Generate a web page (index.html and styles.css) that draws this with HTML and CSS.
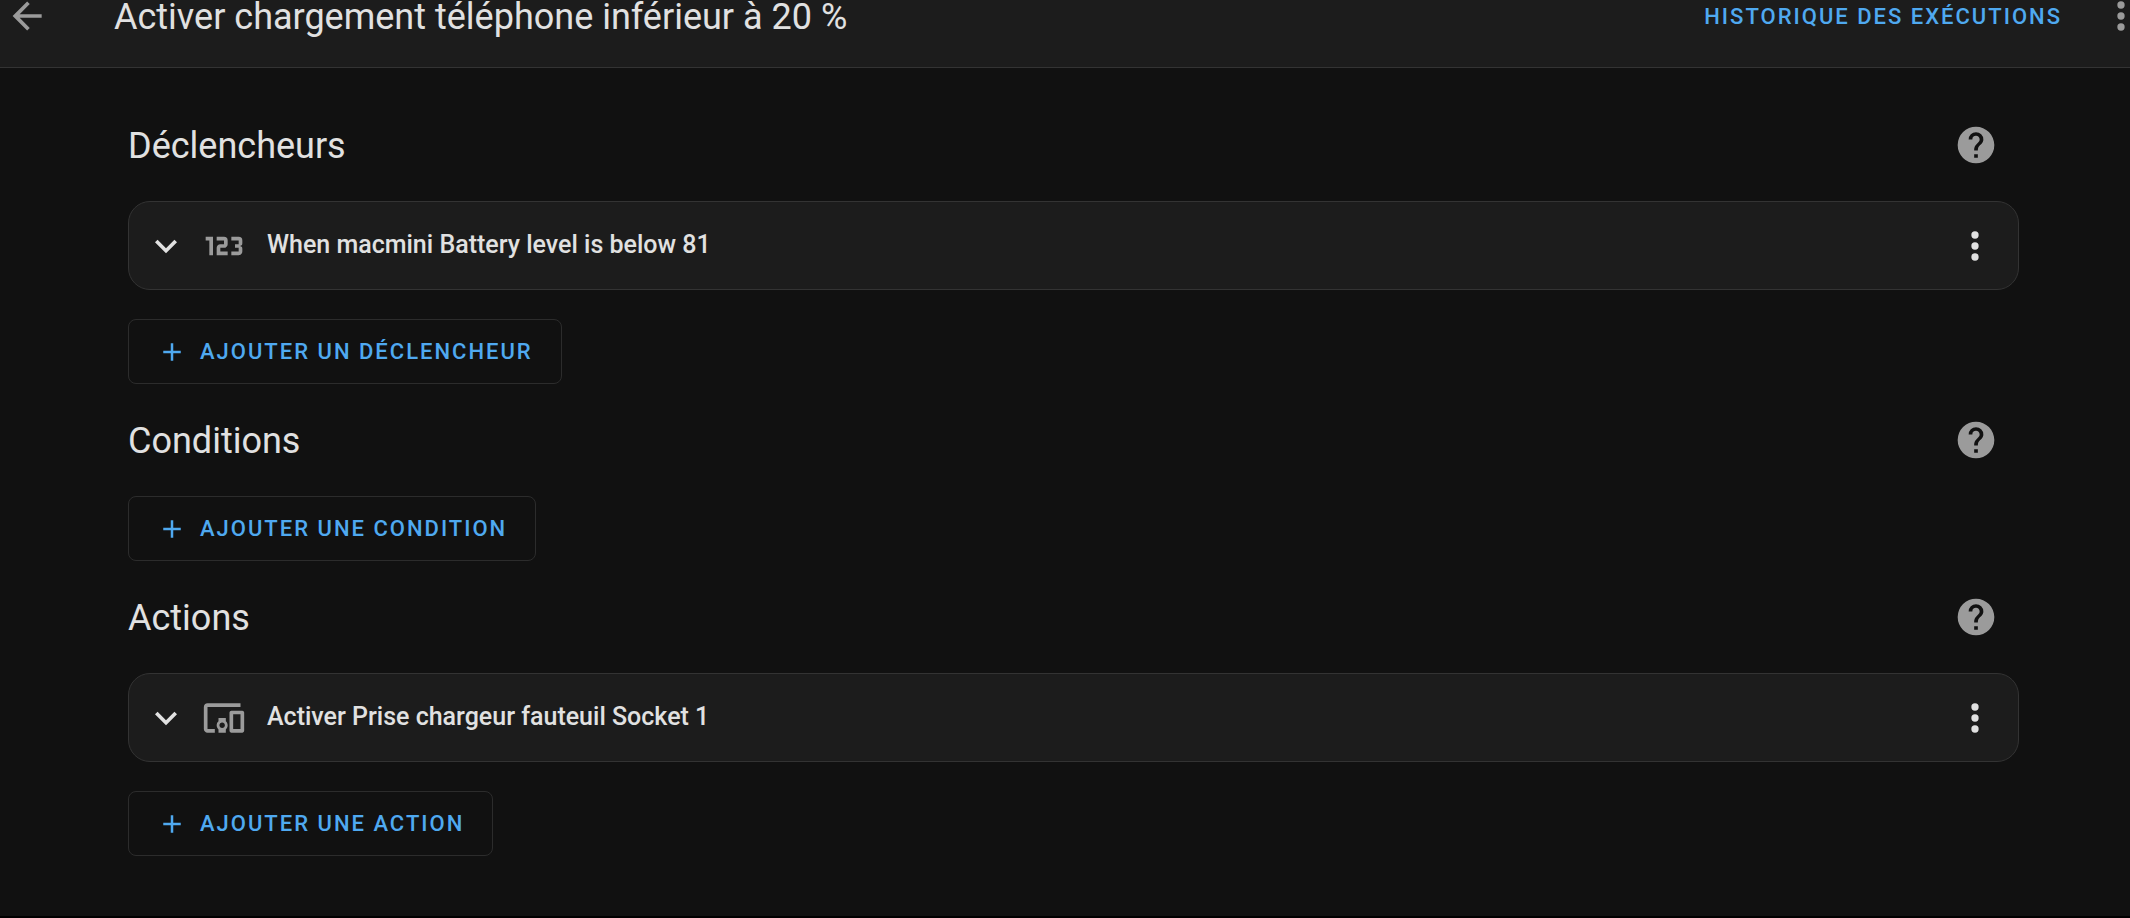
FILE: index.html
```html
<!DOCTYPE html>
<html lang="fr">
<head>
<meta charset="utf-8">
<title>Activer chargement téléphone inférieur à 20 %</title>
<link rel="stylesheet" href="styles.css">
</head>
<body>
<svg class="sprite" aria-hidden="true">
  <symbol id="back" viewBox="0 0 24 24"><path d="M20,11V13H8L13.5,18.5L12.08,19.92L4.16,12L12.08,4.08L13.5,5.5L8,11H20Z"/></symbol>
  <symbol id="dots" viewBox="0 0 24 24"><path d="M12,16A2,2 0 0,1 14,18A2,2 0 0,1 12,20A2,2 0 0,1 10,18A2,2 0 0,1 12,16M12,10A2,2 0 0,1 14,12A2,2 0 0,1 12,14A2,2 0 0,1 10,12A2,2 0 0,1 12,10M12,4A2,2 0 0,1 14,6A2,2 0 0,1 12,8A2,2 0 0,1 10,6A2,2 0 0,1 12,4Z"/></symbol>
  <symbol id="help" viewBox="0 0 24 24"><path d="M15.07,11.25L14.17,12.17C13.45,12.89 13,13.5 13,15H11V14.5C11,13.39 11.45,12.39 12.17,11.67L13.41,10.41C13.78,10.05 14,9.55 14,9C14,7.89 13.1,7 12,7A2,2 0 0,0 10,9H8A4,4 0 0,1 12,5A4,4 0 0,1 16,9C16,9.88 15.64,10.67 15.07,11.25M13,19H11V17H13M12,2A10,10 0 0,0 2,12A10,10 0 0,0 12,22A10,10 0 0,0 22,12C22,6.47 17.5,2 12,2Z"/></symbol>
  <symbol id="chevron" viewBox="0 0 24 24"><path d="M7.41,8.58L12,13.17L16.59,8.58L18,10L12,16L6,10L7.41,8.58Z"/></symbol>
  <symbol id="plus" viewBox="0 0 24 24"><path d="M19,13H13V19H11V13H5V11H11V5H13V11H19V13Z"/></symbol>
  <symbol id="numeric" viewBox="0 0 24 24"><path d="M4,17V9H2V7H6V17H4M22,15C22,16.11 21.1,17 20,17H16V15H20V13H18V11H20V9H16V7H20A2,2 0 0,1 22,9V10.5A1.5,1.5 0 0,1 20.5,12A1.5,1.5 0 0,1 22,13.5V15M14,15V17H8V13C8,11.89 8.9,11 10,11H12V9H8V7H12A2,2 0 0,1 14,9V11C14,12.11 13.1,13 12,13H10V15H14Z"/></symbol>
  <symbol id="devices" viewBox="0 0 24 24"><path d="M3 6H21V4H3C1.9 4 1 4.9 1 6V18C1 19.1 1.9 20 3 20H7V18H3V6M13 12H9V13.78C8.39 14.33 8 15.11 8 16C8 16.89 8.39 17.67 9 18.22V20H13V18.22C13.61 17.67 14 16.88 14 16S13.61 14.33 13 13.78V12M11 17.5C10.17 17.5 9.5 16.83 9.5 16S10.17 14.5 11 14.5 12.5 15.17 12.5 16 11.83 17.5 11 17.5M22 8H16C15.5 8 15 8.5 15 9V19C15 19.5 15.5 20 16 20H22C22.5 20 23 19.5 23 19V9C23 8.5 22.5 8 22 8M21 18H17V10H21V18Z"/></symbol>
</svg>

<header class="toolbar">
  <button class="icon-button muted" type="button" aria-label="Retour"><svg class="icon"><use href="#back"/></svg></button>
  <h1 class="title">Activer chargement téléphone inférieur à 20 %</h1>
  <a class="history" href="#history">HISTORIQUE DES EXÉCUTIONS</a>
  <button class="icon-button muted" type="button" aria-label="Menu"><svg class="icon"><use href="#dots"/></svg></button>
</header>

<main class="content">
  <section class="group">
    <div class="group-head">
      <h2 class="title">Déclencheurs</h2>
      <a class="icon-button muted" href="#help-triggers" aria-label="Aide sur les déclencheurs"><svg class="icon"><use href="#help"/></svg></a>
    </div>
    <article class="card">
      <button class="expand" type="button" aria-expanded="false">
        <svg class="icon"><use href="#chevron"/></svg>
        <svg class="icon muted"><use href="#numeric"/></svg>
        <span class="label">When macmini Battery level is below 81</span>
      </button>
      <button class="icon-button" type="button" aria-label="Options du déclencheur"><svg class="icon"><use href="#dots"/></svg></button>
    </article>
    <button class="add" type="button"><svg class="icon-small"><use href="#plus"/></svg>AJOUTER UN DÉCLENCHEUR</button>
  </section>

  <section class="group">
    <div class="group-head">
      <h2 class="title">Conditions</h2>
      <a class="icon-button muted" href="#help-conditions" aria-label="Aide sur les conditions"><svg class="icon"><use href="#help"/></svg></a>
    </div>
    <button class="add" type="button"><svg class="icon-small"><use href="#plus"/></svg>AJOUTER UNE CONDITION</button>
  </section>

  <section class="group">
    <div class="group-head">
      <h2 class="title">Actions</h2>
      <a class="icon-button muted" href="#help-actions" aria-label="Aide sur les actions"><svg class="icon"><use href="#help"/></svg></a>
    </div>
    <article class="card">
      <button class="expand" type="button" aria-expanded="false">
        <svg class="icon"><use href="#chevron"/></svg>
        <svg class="icon muted"><use href="#devices"/></svg>
        <span class="label">Activer Prise chargeur fauteuil Socket 1</span>
      </button>
      <button class="icon-button" type="button" aria-label="Options de l’action"><svg class="icon"><use href="#dots"/></svg></button>
    </article>
    <button class="add" type="button"><svg class="icon-small"><use href="#plus"/></svg>AJOUTER UNE ACTION</button>
  </section>
</main>
</body>
</html>
```
FILE: styles.css
```css
* {
  box-sizing: border-box;
}

body {
  margin: 0;
  min-height: 100vh;
  overflow: hidden;
  display: flex;
  flex-direction: column;
  background: #111111;
  color: #e1e1e1;
  font-family: Roboto, "Noto Sans", sans-serif;
}

button {
  border: 0;
  padding: 0;
  background: none;
  color: inherit;
  font: inherit;
  cursor: pointer;
}

a {
  text-decoration: none;
}

.sprite {
  display: none;
}

.icon {
  width: 44px;
  height: 44px;
  flex: none;
  fill: currentColor;
}

.icon-small {
  width: 30px;
  height: 30px;
  flex: none;
  fill: currentColor;
}

.icon-button {
  display: flex;
  flex: none;
}

.muted {
  color: #9b9b9b;
}

.title {
  flex: 1;
  margin: 0;
  padding-top: 2px;
  font-size: 36px;
  line-height: 30px;
  font-weight: 400;
}

.toolbar {
  display: flex;
  align-items: center;
  height: 103px;
  margin: -35px -13px 0 0;
  padding-left: 5px;
  background: #1c1c1c;
  border-bottom: 1px solid #333333;
}

.toolbar .title {
  margin-left: 65px;
}

.history,
.add {
  color: #4fa9f0;
  font-size: 22px;
  font-weight: 500;
  letter-spacing: 2px;
}

.history {
  margin-right: 37px;
}

.content {
  flex: 1;
  padding: 21px 111px 0 128px;
  border-bottom: 2px solid #000000;
}

.group-head {
  display: flex;
  align-items: center;
  height: 112px;
  padding-right: 21px;
}

.card {
  display: flex;
  align-items: center;
  margin-bottom: 29px;
  padding: 0 21px 0 15px;
  background: #1c1c1c;
  border: 1px solid #333333;
  border-radius: 22px;
}

.expand {
  display: flex;
  flex: 1;
  align-items: center;
  height: 87px;
  font-size: 25px;
  font-weight: 500;
  text-align: left;
}

.expand .muted {
  margin: 0 21px 0 14px;
}

.label {
  padding-bottom: 2px;
}

.add {
  display: flex;
  align-items: center;
  gap: 13px;
  height: 65px;
  padding: 0 28px;
  border: 1px solid #2c2c2c;
  border-radius: 8px;
}
```
